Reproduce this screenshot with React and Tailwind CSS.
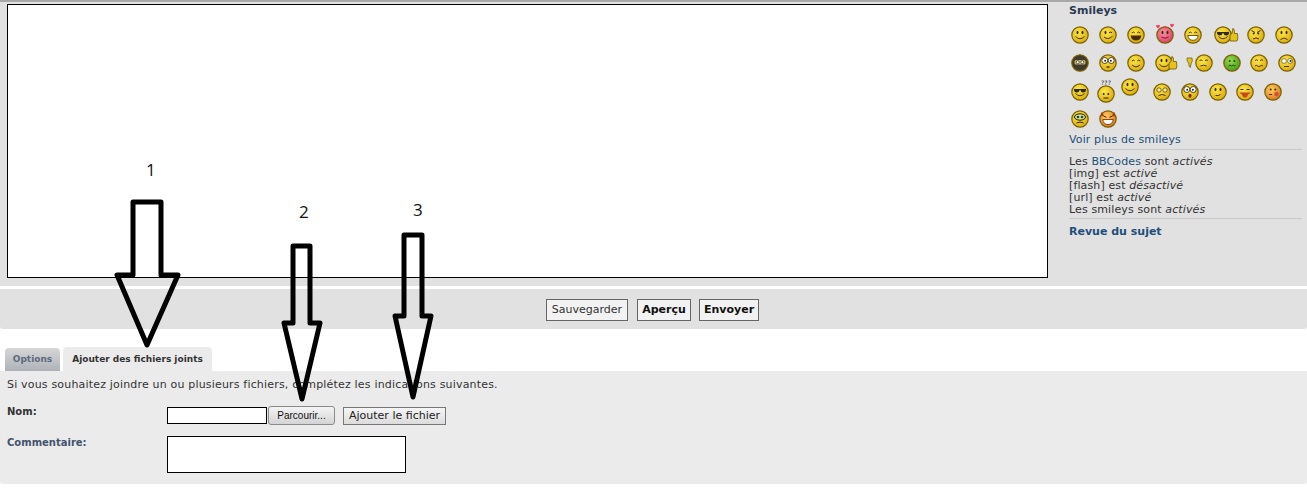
const sans = "font-['DejaVu_Sans',Verdana,sans-serif]";

const eyes = (
  <>
    <ellipse cx="9.5" cy="9.5" rx="1" ry="1.7" fill="#3a2c00" />
    <ellipse cx="14.5" cy="9.5" rx="1" ry="1.7" fill="#3a2c00" />
  </>
);
const smile = <path d="M7.5 13.5q4.5 4.5 9 0" fill="none" stroke="#4a3800" strokeWidth="1" />;
const arcEyes = <path d="M7.8 10q1.5-2 3 0M13.2 10q1.5-2 3 0" fill="none" stroke="#4a3800" strokeWidth="1" />;
const shades = <path d="M6 9h12v1.2q-.2 2.3-2.8 2.3-2.4 0-2.7-2.3h-1q-.3 2.3-2.7 2.3T6 10.2z" fill="#2f2a12" />;
const bigEyes = (
  <>
    <ellipse cx="8.8" cy="9.5" rx="3" ry="3" fill="#fff" stroke="#2a2000" strokeWidth=".8" />
    <ellipse cx="15.2" cy="9.5" rx="3" ry="3" fill="#fff" stroke="#2a2000" strokeWidth=".8" />
    <circle cx="9.2" cy="9.8" r="1" fill="#222" />
    <circle cx="14.8" cy="9.8" r="1" fill="#222" />
  </>
);
const thumb = (x) => (
  <path
    d={`M${x} 18v-6l2-1.5.8-5q2 0 1.6 5h3q1 6-.6 7.5z`}
    fill="#e6c21f"
    stroke="#6b5400"
    strokeWidth=".8"
  />
);

const faces = {
  smile: <>{eyes}{smile}</>,
  wink: <>
    <ellipse cx="9.5" cy="9.5" rx="1" ry="1.7" fill="#3a2c00" />
    <path d="M13 9.8q1.5-1.4 3 0" fill="none" stroke="#3a2c00" />
    <path d="M8 14q4 3.4 8.5-.8" fill="none" stroke="#4a3800" />
  </>,
  laugh: <>{arcEyes}<path d="M6.8 12.5h10.4q-.4 5-5.2 5t-5.2-5z" fill="#4a2a00" /></>,
  love: <>
    {eyes}
    <path d="M8.5 14q3.5 2.5 7 0" fill="none" stroke="#7a1c30" />
    <path d="M3 2.5q1-1.5 2 0 1-1.5 2 0 0 1.5-2 3-2-1.5-2-3zM17 1.5q1-1.5 2 0 1-1.5 2 0 0 1.5-2 3-2-1.5-2-3zM10.5 3.5q.7-1 1.5 0 .8-1 1.5 0 0 1-1.5 2-1.5-1-1.5-2z" fill="#f03d6a" />
  </>,
  grin: <>{arcEyes}<path d="M6.8 12.5h10.4q-.6 4.8-5.2 4.8t-5.2-4.8z" fill="#fff" stroke="#4a3800" strokeWidth=".8" /></>,
  coolThumb: <>{shades}{smile}{thumb(19)}</>,
  angry: <>
    <path d="M7.5 7.5l3.5 2M16.5 7.5l-3.5 2" stroke="#3a2c00" fill="none" />
    <circle cx="9.7" cy="10.5" r="1" fill="#3a2c00" />
    <circle cx="14.3" cy="10.5" r="1" fill="#3a2c00" />
    <path d="M9 16q3-2.2 6 0" fill="none" stroke="#4a3800" />
  </>,
  sad: <>{eyes}<path d="M8.5 16.5q3.5-3 7 0" fill="none" stroke="#4a3800" /></>,
  ninja: <>
    <rect x="6.5" y="9" width="11" height="4.5" rx="1.5" fill="#c8b66a" />
    <circle cx="9.7" cy="11.2" r="1.5" fill="#fff" stroke="#111" strokeWidth=".6" />
    <circle cx="14.3" cy="11.2" r="1.5" fill="#fff" stroke="#111" strokeWidth=".6" />
  </>,
  eyes: <>{bigEyes}<ellipse cx="12" cy="16" rx="1.8" ry="1" fill="#6b4a00" /></>,
  closed: <>{arcEyes}<path d="M8 14q4 3.6 8 0" fill="none" stroke="#4a3800" /></>,
  thumbUp: <>{eyes}{smile}{thumb(17)}</>,
  thumbDown: <>
    <path d="M-5 7h5q1 4-.8 5l-.8 4.5q-2-.5-1.5-4.5-2-.4-1.9-5z" fill="#e6c21f" stroke="#6b5400" strokeWidth=".7" />
    <path d="M7.5 9.5q1.5-1 3 0M13 9.5q1.5-1 3 0M8.5 15q3-1.5 6 0" fill="none" stroke="#4a3800" />
  </>,
  sick: <>
    <circle cx="9.7" cy="10" r="1" fill="#164d10" />
    <circle cx="14.3" cy="10" r="1" fill="#164d10" />
    <path d="M8.5 15l1.5-1 1.5 1 1.5-1 1.5 1 1-1" fill="none" stroke="#164d10" />
  </>,
  worried: <>
    <path d="M8 9.5q1.5-1.5 3 0M13 9.5q1.5-1.5 3 0" fill="none" stroke="#4a3800" />
    <path d="M8 15q1.3-1.3 2.6 0t2.6 0 2.8 0" fill="none" stroke="#4a3800" />
  </>,
  roll: <>
    <circle cx="9" cy="10" r="2.4" fill="#fff" stroke="#4a3800" strokeWidth=".6" />
    <circle cx="15" cy="10" r="2.4" fill="#fff" stroke="#4a3800" strokeWidth=".6" />
    <circle cx="15.5" cy="10" r="1" fill="#222" />
    <path d="M9 15.5h5" stroke="#4a3800" />
  </>,
  cool: <>{shades}{smile}</>,
  puzzled: <>
    <circle cx="9.7" cy="12" r=".9" fill="#222" />
    <circle cx="14.3" cy="12" r=".9" fill="#222" />
    <path d="M9.5 16h5" stroke="#222" />
    <text x="12" y="2.5" textAnchor="middle" fontSize="6" fill="#222">???</text>
  </>,
  dizzy: <>
    <circle cx="9" cy="10" r="2.2" fill="#f0e7a0" stroke="#4a3800" strokeWidth=".7" />
    <circle cx="15" cy="10" r="2.2" fill="#f0e7a0" stroke="#4a3800" strokeWidth=".7" />
    <path d="M8.5 15.5q3.5-2 7 0" fill="none" stroke="#4a3800" />
  </>,
  shock: <>{bigEyes}<ellipse cx="12" cy="15.8" rx="1.6" ry="2" fill="#7a2a00" /></>,
  hmm: <>{eyes}<path d="M9.5 15.5q3 .6 5-1" fill="none" stroke="#4a3800" /></>,
  tongue: <>
    <path d="M7.5 9.5h3M13.5 9.5h3" stroke="#3a2c00" />
    <path d="M6.5 12.5h11q-.6 1.6-2.6 2q-.2 3-2.9 3t-2.9-3q-2-.4-2.6-2z" fill="#c8461c" />
  </>,
  blush: <>
    <circle cx="9.7" cy="9.5" r="1" fill="#3a2c00" />
    <circle cx="14.3" cy="9.5" r="1" fill="#3a2c00" />
    <circle cx="15.5" cy="14" r="2.2" fill="#d8502c" />
    <path d="M8 14.5h3" stroke="#4a3800" />
  </>,
  mono: <>
    <ellipse cx="12" cy="10" rx="5.5" ry="3.2" fill="#cfe0a0" stroke="#2a2000" />
    <circle cx="10" cy="10" r="1.3" fill="#214d10" />
    <circle cx="14" cy="10" r="1.3" fill="#214d10" />
    <path d="M8.5 16q3.5-2 7 0" fill="none" stroke="#2a2000" />
  </>,
  devil: <>
    <path d="M5 5l3 3.2-2.4 1.5zM19 5l-3 3.2 2.4 1.5z" fill="#b32d10" />
    <path d="M7.5 9l3 1.3M16.5 9l-3 1.3" stroke="#4a1000" />
    <path d="M6.8 12.5h10.4q-.5 5-5.2 5t-5.2-5z" fill="#fff" stroke="#7a2000" strokeWidth=".8" />
  </>,
};

const fills = {
  yellow: "url(#yellow)",
  pink: "url(#pink)",
  dark: "#3f3a2c",
  green: "url(#green)",
  orange: "url(#orange)",
};

const Smiley = ({ kind, fill = "yellow", className = "" }) => (
  <svg width="28" height="26" viewBox="-2 -1 28 26" className={`shrink-0 overflow-visible ${className}`}>
    <circle cx="12" cy="12" r="8.2" fill={fills[fill]} stroke="#7a6000" strokeWidth="1.2" />
    {faces[kind]}
  </svg>
);

const rows = [
  {
    margin: "mb-[2px]",
    items: [
      { kind: "smile" },
      { kind: "wink" },
      { kind: "laugh" },
      { kind: "love", fill: "pink", className: "ml-px" },
      { kind: "grin" },
      { kind: "coolThumb", className: "ml-0.5" },
      { kind: "angry", className: "ml-[5px]" },
      { kind: "sad" },
    ],
  },
  {
    margin: "mb-[3px]",
    items: [
      { kind: "ninja", fill: "dark" },
      { kind: "eyes" },
      { kind: "closed" },
      { kind: "thumbUp" },
      { kind: "thumbDown", className: "ml-[12px]" },
      { kind: "sick", fill: "green" },
      { kind: "worried", className: "-ml-px" },
      { kind: "roll" },
    ],
  },
  {
    margin: "mb-px",
    items: [
      { kind: "cool" },
      { kind: "puzzled", className: "-ml-0.5 mt-0.5" },
      { kind: "smile", className: "-ml-1 -mt-[5px]" },
      { kind: "dizzy", className: "ml-1" },
      { kind: "shock" },
      { kind: "hmm" },
      { kind: "tongue", className: "-ml-px" },
      { kind: "blush", fill: "orange" },
    ],
  },
  {
    margin: "mb-0",
    items: [
      { kind: "mono" },
      { kind: "devil", fill: "orange" },
    ],
  },
];

// hand drawn arrows and numbers painted on top of the screenshot
const Arrow = ({ d }) => (
  <path d={d} fill="none" stroke="#000" strokeWidth="5" strokeLinejoin="round" />
);

const App = () => {
  return (
    <div className={`relative w-[1307px] h-[501px] overflow-hidden bg-white text-[11px] text-[#333] ${sans}`}>
      <svg width="0" height="0" className="absolute">
        <defs>
          <radialGradient id="yellow" cx=".4" cy=".35" r=".75">
            <stop offset="0" stopColor="#fde84a" />
            <stop offset="1" stopColor="#d6a306" />
          </radialGradient>
          <radialGradient id="pink" cx=".4" cy=".35" r=".75">
            <stop offset="0" stopColor="#fb8fa2" />
            <stop offset="1" stopColor="#d53a5c" />
          </radialGradient>
          <radialGradient id="green" cx=".4" cy=".35" r=".75">
            <stop offset="0" stopColor="#9bd84a" />
            <stop offset="1" stopColor="#3f9414" />
          </radialGradient>
          <radialGradient id="orange" cx=".4" cy=".35" r=".75">
            <stop offset="0" stopColor="#fbd25a" />
            <stop offset="1" stopColor="#dc6a1c" />
          </radialGradient>
        </defs>
      </svg>

      {/* Editor + sidebar */}
      <div className="flex h-[286px] border-t-2 border-[#a8a8a8] bg-[#e1e1e1] pl-[7px] pt-[2px]">
        <div className="w-[1041px] h-[274px] shrink-0 border border-black bg-white" />
        <div className="ml-[21px] w-[233px] leading-[12px] tracking-[.12px]">
          <div className="pt-[1px] h-[16px] font-bold text-[#2b3a52] tracking-normal">Smileys</div>
          <div className="-ml-[3px] pt-[2px]">
            {rows.map((row, i) => (
              <div key={i} className={`flex items-start h-[26px] ${row.margin}`}>
                {row.items.map((s, j) => (
                  <Smiley key={j} {...s} />
                ))}
              </div>
            ))}
          </div>
          <div className="mt-[2px] text-[#1d4f7c]">Voir plus de smileys</div>
          <div className="mt-[3px] border-t border-[#c9c9c9] pt-[6px]">
            <div>
              Les <span className="text-[#1d4f7c]">BBCodes</span> sont <em>activés</em>
            </div>
            <div>[img] est <em>activé</em></div>
            <div>[flash] est <em>désactivé</em></div>
            <div>[url] est <em>activé</em></div>
            <div>Les smileys sont <em>activés</em></div>
          </div>
          <div className="mt-[2px] border-t border-[#c9c9c9] pt-[7px] font-bold text-[#1d4f7c] tracking-normal">Revue du sujet</div>
        </div>
      </div>

      {/* Submit bar */}
      <div className="mt-[3px] flex h-[40px] items-center justify-center gap-2 rounded-b-[3px] bg-[#e1e1e1] pt-[1px] pr-[2px]">
        <button className="h-[22px] w-[82px] border border-[#666] bg-[#f2f2f2] pt-px text-[11px] text-[#333]">Sauvegarder</button>
        <button className="ml-px h-[22px] w-[54px] border border-[#666] bg-[#f2f2f2] pt-px text-[11px] font-bold text-[#111]">Aperçu</button>
        <button className="h-[22px] w-[60px] border border-[#666] bg-[#f2f2f2] pt-px text-[11px] font-bold text-[#111]">Envoyer</button>
      </div>

      {/* Tabs */}
      <div className="mt-[18px] flex h-[24px] items-end gap-[3px] pl-[5px]">
        <div className="flex h-[23px] w-[55px] items-center justify-center rounded-t-[4px] bg-gradient-to-b from-[#d6d6d6] to-[#aeb2b8] pt-px text-[9px] font-bold text-[#5a6a80]">
          Options
        </div>
        <div className="flex h-[24px] w-[149px] items-center justify-center rounded-t-[4px] bg-[#ebebeb] pt-px text-[9px] font-bold text-[#333]">
          Ajouter des fichiers joints
        </div>
      </div>

      {/* Attachment panel */}
      <div className="h-[113px] rounded-b-[3px] bg-[#ebebeb] px-[7px]">
        <p className="pt-[7px] leading-[14px] tracking-[.18px]">Si vous souhaitez joindre un ou plusieurs fichiers, complétez les indications suivantes.</p>
        <div className="mt-[13px] flex h-[31px] items-start">
          <div className="w-[160px] text-[10px] leading-[12px] pt-px font-bold text-[#333]">Nom:</div>
          <div className="flex items-center h-[20px]">
            <input className="h-[17px] w-[100px] border border-black bg-white" />
            <button className="ml-px h-[19px] w-[67px] rounded-[3px] border border-[#8a8a8a] bg-gradient-to-b from-[#f4f4f4] to-[#d4d4d4] font-['Liberation_Sans',sans-serif] text-[10px] text-[#111]">
              Parcourir...
            </button>
            <button className="ml-2 mt-px h-[18px] w-[103px] border border-[#777] bg-gradient-to-b from-[#f6f6f6] to-[#dcdcdc] text-[11px] text-[#222]">
              Ajouter le fichier
            </button>
          </div>
        </div>
        <div className="flex items-start">
          <div className="w-[160px] text-[10px] leading-[12px] pt-px font-bold text-[#43546e]">Commentaire:</div>
          <div className="h-[37px] w-[239px] border border-black bg-white" />
        </div>
      </div>

      {/* Annotations */}
      <svg width="1307" height="501" className="absolute left-0 top-0 pointer-events-none">
        <Arrow d="M133 275V202H161V275H178L147 345L117 275Z" />
        <Arrow d="M293 323V246H310V323H320L302 399L284 323Z" />
        <Arrow d="M404 316V235H422V316H431L413 397L395 316Z" />
      </svg>
      <span className="absolute left-[146px] top-[158px] font-['Open_Sans',sans-serif] text-[17px] leading-[24px] text-[#111]">1</span>
      <span className="absolute left-[299px] top-[200px] font-['Open_Sans',sans-serif] text-[17px] leading-[24px] text-[#111]">2</span>
      <span className="absolute left-[413px] top-[198px] font-['Open_Sans',sans-serif] text-[17px] leading-[24px] text-[#111]">3</span>
    </div>
  );
};

export default App;
